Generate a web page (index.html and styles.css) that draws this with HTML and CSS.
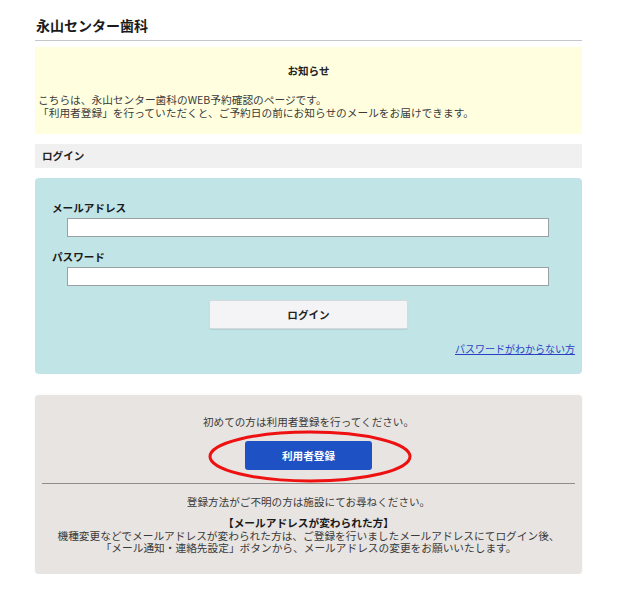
FILE: index.html
```html
<!DOCTYPE html>
<html lang="ja">
<head>
<meta charset="utf-8">
<title>永山センター歯科</title>
<link rel="stylesheet" href="styles.css">
</head>
<body>
<div class="page">
  <h1 class="site-title">永山センター歯科</h1>

  <section class="notice">
    <h2 class="notice-title">お知らせ</h2>
    <p class="notice-text">こちらは、永山センター歯科のWEB予約確認のページです。<br>「利用者登録」を行っていただくと、ご予約日の前にお知らせのメールをお届けできます。</p>
  </section>

  <h2 class="section-head">ログイン</h2>

  <form class="login-box">
    <label class="field-label" for="email">メールアドレス</label>
    <input class="field-input" id="email" type="text">
    <label class="field-label pw-label" for="pw">パスワード</label>
    <input class="field-input" id="pw" type="password">
    <div class="btn-row"><button type="button" class="login-btn">ログイン</button></div>
    <div class="forgot"><a href="#" class="forgot-link">パスワードがわからない方</a></div>
  </form>

  <section class="register">
    <p class="reg-lead">初めての方は利用者登録を行ってください。</p>
    <div class="reg-row">
      <div class="reg-wrap">
        <button type="button" class="reg-btn">利用者登録</button>
        <svg class="reg-circle" width="205" height="54" viewBox="0 0 205 54" aria-hidden="true">
          <ellipse cx="102" cy="26.5" rx="100" ry="24.5" fill="none" stroke="#ee1111" stroke-width="3"/>
        </svg>
      </div>
    </div>
    <hr class="reg-rule">
    <p class="reg-note">登録方法がご不明の方は施設にてお尋ねください。</p>
    <p class="reg-change"><strong class="reg-change-title">【メールアドレスが変わられた方】</strong><br>機種変更などでメールアドレスが変わられた方は、ご登録を行いましたメールアドレスにてログイン後、<br>「メール通知・連絡先設定」ボタンから、メールアドレスの変更をお願いいたします。</p>
  </section>
</div>
</body>
</html>
```

FILE: styles.css
```css
* { box-sizing: border-box; }

body {
  margin: 0;
  background: #ffffff;
  font-family: "Noto Sans CJK JP", "Noto Sans", sans-serif;
  color: #222;
  font-size: 10.6px;
}

.page {
  width: 547px;
  margin-left: 35px;
}

.site-title {
  margin: 0;
  padding: 17px 0 7px 1px;
  font-size: 14px;
  line-height: 16px;
  font-weight: bold;
  color: #1a1a1a;
  border-bottom: 1px solid #c4c6cc;
}

.notice {
  margin-top: 6px;
  background: #ffffe0;
  padding: 17px 3px 15px;
}

.notice-title {
  margin: 0;
  text-align: center;
  font-size: 10.6px;
  line-height: 14px;
  font-weight: bold;
}

.notice-text {
  margin: 16px 0 0;
  font-size: 10.7px;
  line-height: 12.5px;
  color: #3a3a3a;
}

.section-head {
  margin: 10px 0 0;
  height: 24px;
  padding-left: 7px;
  background: #f0f0f0;
  font-size: 10.6px;
  line-height: 24px;
  font-weight: bold;
}

.login-box {
  margin: 10px 0 0;
  background: #c1e4e7;
  border-radius: 4px;
  padding: 23px 7px 18px 17px;
  display: flex;
  flex-direction: column;
}

.field-label {
  font-weight: bold;
  line-height: 14px;
  color: #1a1a1a;
}

.field-input {
  margin: 3px 26px 0 15px;
  height: 19px;
  border: 1px solid #9aa0a3;
  background: #fff;
  padding: 0 3px;
}

.pw-label { margin-top: 13px; }

.btn-row {
  display: flex;
  justify-content: center;
  margin-top: 14px;
  padding-right: 10px;
}

.login-btn {
  width: 199px;
  height: 29px;
  background: #f4f4f6;
  border: 1px solid #d4dadc;
  border-radius: 2px;
  box-shadow: 0 1px 1px rgba(0,0,0,0.08);
  font-family: inherit;
  font-size: 10.6px;
  font-weight: bold;
  color: #222;
  cursor: pointer;
}

.forgot {
  margin-top: 13px;
  text-align: right;
  line-height: 14px;
}

.forgot-link {
  font-size: 10px;
  color: #2b3fc4;
  text-decoration: underline;
}

.register {
  margin-top: 21px;
  background: #e8e4e1;
  border-radius: 4px;
  box-shadow: 0 0 2px rgba(0,0,0,0.08);
  padding: 20px 4px 19px;
  text-align: center;
  color: #3a3a3a;
}

.reg-lead {
  margin: 0;
  line-height: 14px;
}

.reg-row {
  display: flex;
  justify-content: center;
  margin-top: 12px;
}

.reg-wrap {
  position: relative;
}

.reg-btn {
  display: block;
  width: 127px;
  height: 29px;
  background: #1d51c4;
  border: none;
  border-radius: 3px;
  color: #fff;
  font-family: inherit;
  font-size: 10.6px;
  font-weight: bold;
  cursor: pointer;
}

.reg-circle {
  position: absolute;
  left: -37px;
  top: -11px;
  pointer-events: none;
}

.reg-rule {
  margin: 13px 3px 0;
  border: none;
  border-top: 1px solid #8f8d8b;
}

.reg-note {
  margin: 11px 0 0;
  line-height: 14px;
}

.reg-change {
  margin: 8px 0 0;
  font-size: 10.7px;
  line-height: 12.5px;
}

.reg-change-title {
  color: #1a1a1a;
}
```
